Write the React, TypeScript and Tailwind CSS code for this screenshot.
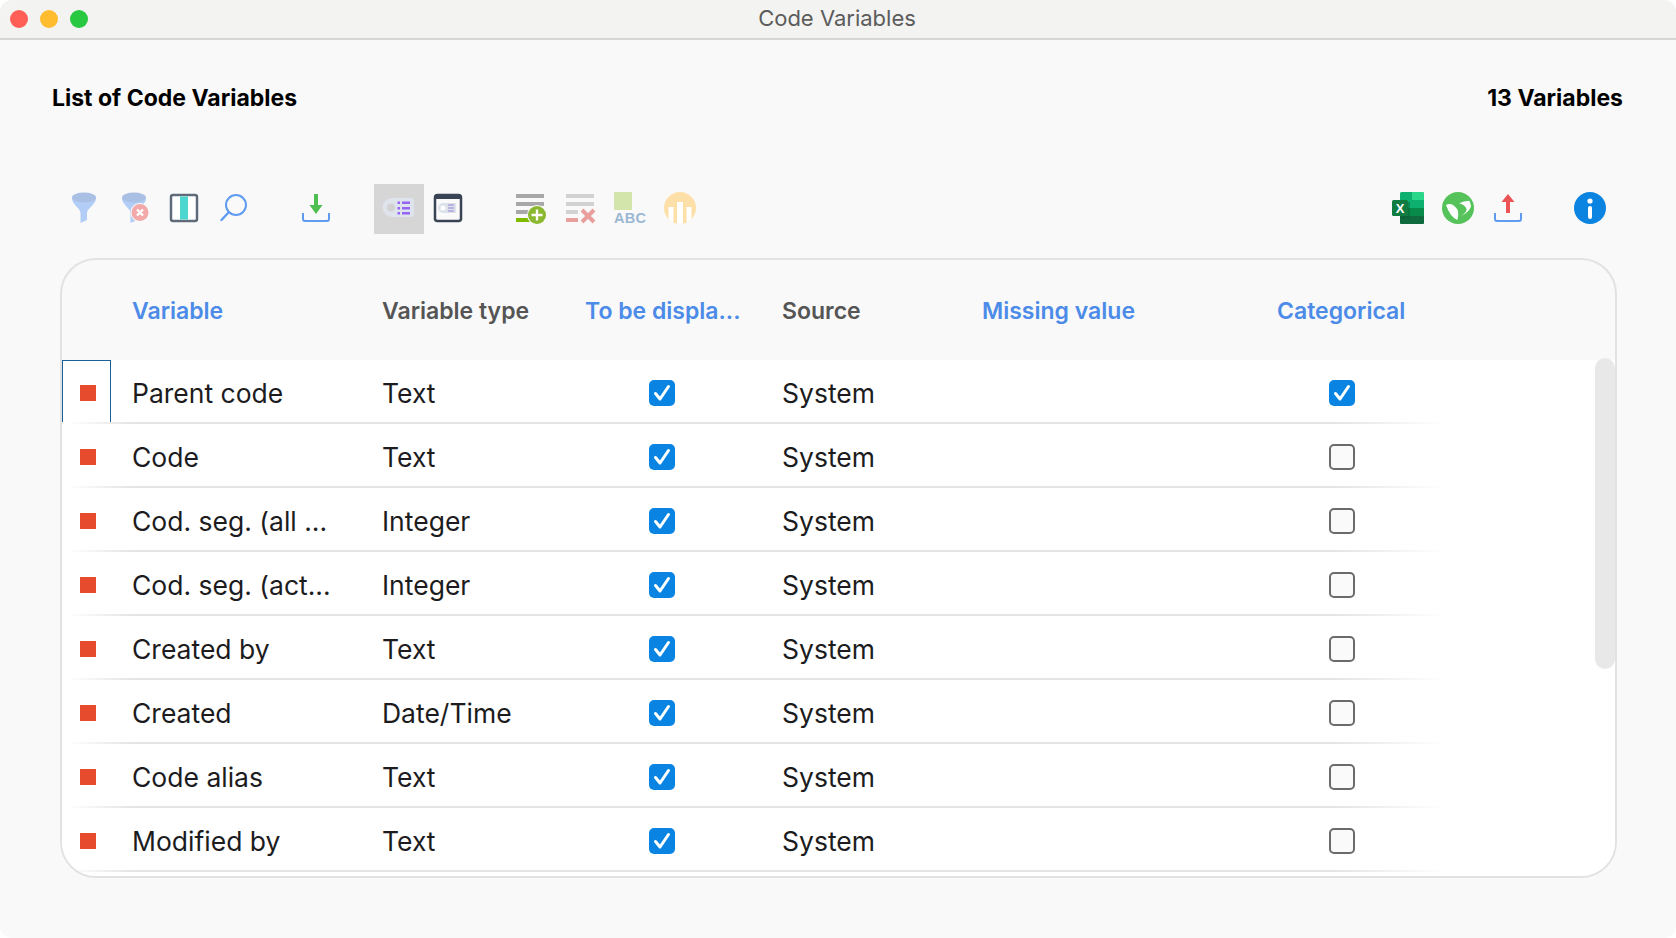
import React from "react";

const rows = [
    ["Parent code", "Text", true],
    ["Code", "Text", false],
    ["Cod. seg. (all ...", "Integer", false],
    ["Cod. seg. (act...", "Integer", false],
    ["Created by", "Text", false],
    ["Created", "Date/Time", false],
    ["Code alias", "Text", false],
    ["Modified by", "Text", false],
] as const;

function Icon({ children }: { children: React.ReactNode }) {
    return (
        <svg viewBox="0 0 32 32" className="w-8 h-8 overflow-visible">
            {children}
        </svg>
    );
}

function Slot({ children, active }: { children: React.ReactNode; active?: boolean }) {
    return (
        <div className={"w-[50px] h-[50px] flex items-start pt-2 justify-center " + (active ? "bg-[#d6d6d6]" : "")}>
            {children}
        </div>
    );
}

function Funnel() {
    return (
        <>
            <path d="M4 6C4 13 12.5 16 12.5 21V31L19 28V21C19 16 28 13 28 6Z" fill="#b2cdf6" />
            <ellipse cx="16" cy="5.5" rx="12" ry="5" fill="#a9bfe3" />
        </>
    );
}

function Tray() {
    return <path d="M3 21V27Q3 29 5 29H27Q29 29 29 27V21" fill="none" stroke="#5f9bf0" strokeWidth="2" />;
}

function Checkbox({ checked }: { checked: boolean }) {
    if (checked) {
        return (
            <div className="w-[26px] h-[26px] rounded-[5px] bg-[#0a84e3] flex items-center justify-center">
                <svg viewBox="0 0 26 26" className="w-[26px] h-[26px]">
                    <path d="M6.5 13.5L11 19L19.5 6.5" fill="none" stroke="#fff" strokeWidth="3" strokeLinecap="round" strokeLinejoin="round" />
                </svg>
            </div>
        );
    }
    return <div className="w-[26px] h-[26px] rounded-[5px] border-2 border-[#6b6b6b] bg-[#fafafa]" />;
}

export default function App() {
    return (
        <div className="w-[1676px] h-[938px] bg-white overflow-hidden font-['Inter',sans-serif]">
            <div className="h-full rounded-[12px] bg-[#f9f9f9] overflow-hidden">
                <div className="h-[40px] relative bg-[#f3f3f1] border-b-2 border-[#d6d6d6] flex items-center justify-center">
                    <div className="absolute left-[10px] top-[10px] flex gap-3">
                        <span className="w-[18px] h-[18px] rounded-full bg-[#ff5f57]" />
                        <span className="w-[18px] h-[18px] rounded-full bg-[#febc2e]" />
                        <span className="w-[18px] h-[18px] rounded-full bg-[#28c840]" />
                    </div>
                    <span className="text-[22px] text-[#5c5c5c] -ml-[2px] mb-[2px]">Code Variables</span>
                </div>

                <div className="flex justify-between pl-[52px] pr-[53px] pt-[44px] text-[23px] leading-[28px] font-bold text-black">
                    <span>List of Code Variables</span>
                    <span>13 Variables</span>
                </div>

                <div className="flex justify-between mt-[72px] ml-[59px] mr-[61px]">
                    <div className="flex">
                        <div className="flex">
                            <Slot>
                                <Icon>
                                    <Funnel />
                                </Icon>
                            </Slot>
                            <Slot>
                                <Icon>
                                    <Funnel />
                                    <circle cx="22" cy="20.5" r="9.5" fill="#f9f9f9" />
                                    <circle cx="22" cy="20.5" r="8.5" fill="#f2a9a9" />
                                    <path d="M19 17.5L25 23.5M25 17.5L19 23.5" stroke="#fff" strokeWidth="2.4" />
                                </Icon>
                            </Slot>
                            <Slot>
                                <Icon>
                                    <rect x="3" y="3" width="26" height="26" rx="2" fill="#fff" stroke="#5f6b7a" strokeWidth="2.5" />
                                    <rect x="12" y="4.5" width="8" height="23" fill="#4dd6cf" />
                                </Icon>
                            </Slot>
                            <Slot>
                                <Icon>
                                    <circle cx="18" cy="13" r="10" fill="none" stroke="#5f9bf0" strokeWidth="2" />
                                    <path d="M10.5 20.5L3.5 28" stroke="#5f9bf0" strokeWidth="2.4" strokeLinecap="round" />
                                </Icon>
                            </Slot>
                        </div>
                        <div className="ml-8">
                            <Slot>
                                <Icon>
                                    <Tray />
                                    <path d="M14 2H18V13H22.5L16 22L9.5 13H14Z" fill="#4fbf52" />
                                </Icon>
                            </Slot>
                        </div>
                        <div className="flex ml-[33px]">
                            <Slot active>
                                <Icon>
                                    <path d="M9 6H28Q31 6 31 10V21Q31 25 28 25H9A9.5 9.5 0 0 1 9 6Z" fill="#dfe3ec" />
                                    <circle cx="8" cy="15.5" r="4" fill="#d2d2d2" />
                                    <g fill="#9466f5">
                                        <rect x="14.5" y="9.5" width="2.5" height="2.5" />
                                        <rect x="14.5" y="15" width="2.5" height="2.5" />
                                        <rect x="14.5" y="20" width="2.5" height="2.5" />
                                        <rect x="19" y="9.5" width="8" height="2.5" />
                                        <rect x="19" y="15" width="8" height="2.5" />
                                        <rect x="19" y="20" width="8" height="2.5" />
                                    </g>
                                </Icon>
                            </Slot>
                            <Slot>
                                <Icon>
                                    <rect x="2" y="3" width="26" height="26" rx="2.5" fill="#fafafa" stroke="#3a4354" strokeWidth="2.5" />
                                    <rect x="2" y="3" width="26" height="4" fill="#3a4354" />
                                    <path d="M10 11H22Q23 11 23 12V20Q23 21 22 21H10A5 5 0 0 1 10 11Z" fill="#dde2ea" />
                                    <circle cx="10" cy="16" r="2.5" fill="#fff" />
                                    <path d="M15 13H21M15 16H21M15 19H21" stroke="#9a84d8" strokeWidth="1.2" />
                                </Icon>
                            </Slot>
                        </div>
                        <div className="flex ml-8">
                            <Slot>
                                <Icon>
                                    <rect x="1" y="2" width="28" height="4" fill="#a8a8a8" />
                                    <rect x="1" y="10" width="28" height="4" fill="#a8a8a8" />
                                    <rect x="1" y="18" width="14" height="4" fill="#a8a8a8" />
                                    <rect x="1" y="26" width="14" height="4" fill="#7fbb00" />
                                    <circle cx="22" cy="23" r="10" fill="#f9f9f9" />
                                    <circle cx="22" cy="23" r="9" fill="#8ab82e" />
                                    <path d="M22 17.5V28.5M16.5 23H27.5" stroke="#fff" strokeWidth="2.4" />
                                </Icon>
                            </Slot>
                            <Slot>
                                <Icon>
                                    <rect x="1" y="2" width="28" height="4" fill="#d2d2d2" />
                                    <rect x="1" y="10" width="28" height="4" fill="#d2d2d2" />
                                    <rect x="1" y="18" width="12" height="4" fill="#d2d2d2" />
                                    <rect x="1" y="26" width="12" height="4" fill="#e8a09c" />
                                    <path d="M17 18L29 30M29 18L17 30" stroke="#e8a09c" strokeWidth="4" />
                                </Icon>
                            </Slot>
                            <Slot>
                                <Icon>
                                    <rect x="-1" y="0" width="18" height="18" fill="#d3e5ab" />
                                    <text x="-1" y="31" fontFamily="Liberation Sans" fontWeight="700" fontSize="14.5" textLength="32" fill="#9bb8d3">
                                        ABC
                                    </text>
                                </Icon>
                            </Slot>
                            <Slot>
                                <Icon>
                                    <defs>
                                        <clipPath id="chart">
                                            <circle cx="15" cy="16" r="16" />
                                        </clipPath>
                                    </defs>
                                    <circle cx="15" cy="16" r="16" fill="#fde0a8" />
                                    <path d="M3.5 15H8.5V32H3.5ZM12 10H18V32H12ZM21.5 15H26.5V32H21.5Z" fill="#fff" clipPath="url(#chart)" />
                                </Icon>
                            </Slot>
                        </div>
                    </div>
                    <div className="flex">
                        <Slot>
                            <Icon>
                                <rect x="8" y="0" width="24" height="32" rx="1.5" fill="#0eb070" />
                                <path d="M20 0H30.5Q32 0 32 1.5V8H20Z" fill="#2ad68a" />
                                <rect x="8" y="16" width="24" height="8" fill="#088a4a" />
                                <path d="M8 24H32V30.5Q32 32 30.5 32H9.5Q8 32 8 30.5Z" fill="#0f6b3e" />
                                <rect x="8" y="10" width="10" height="17" fill="#0a5c34" opacity="0.45" />
                                <rect x="0" y="8" width="16" height="16" rx="1.5" fill="#107c41" />
                                <text x="8" y="20.5" textAnchor="middle" fontFamily="Liberation Sans" fontWeight="700" fontSize="13" fill="#fff">
                                    X
                                </text>
                            </Icon>
                        </Slot>
                        <Slot>
                            <Icon>
                                <circle cx="16" cy="16" r="16" fill="#55c25a" />
                                <path d="M4 13Q9.7 9.7 15.3 17.3Q17.3 21.3 15.3 28Q8 24.7 4 13Z" fill="#fff" />
                                <path d="M27.3 8.7Q21.3 8.7 17.3 11.3Q23 13 24.7 17.3Q24 21.3 18.7 24Q26 21.3 29 14.7Q28.7 11.3 27.3 8.7Z" fill="#fff" />
                            </Icon>
                        </Slot>
                        <div className="mr-8">
                            <Slot>
                                <Icon>
                                    <Tray />
                                    <path d="M16 2L22.5 10H18V21H14V10H9.5Z" fill="#ea5455" />
                                </Icon>
                            </Slot>
                        </div>
                        <Slot>
                            <Icon>
                                <circle cx="16" cy="16" r="16" fill="#0a84e0" />
                                <circle cx="16" cy="9" r="2.6" fill="#fff" />
                                <rect x="14" y="14" width="4" height="13" rx="2" fill="#fff" />
                            </Icon>
                        </Slot>
                    </div>
                </div>

                <div className="relative mt-[24px] ml-[60px] w-[1557px] h-[620px] rounded-[36px] border-2 border-[#e2e2e2] overflow-hidden">
                    <div className="h-[100px] flex items-center text-[23px] font-semibold text-[#4c8be8] pt-[2px]">
                        <div className="ml-[70px] w-[250px]">Variable</div>
                        <div className="w-[203px] text-[#555]">Variable type</div>
                        <div className="w-[197px]">To be displa...</div>
                        <div className="w-[200px] text-[#555]">Source</div>
                        <div className="w-[295px]">Missing value</div>
                        <div>Categorical</div>
                    </div>
                    <div className="bg-white h-[518px]">
                        {rows.map((r, i) => (
                            <div key={i} className="h-[64px] relative flex items-center text-[26.5px] text-[#1c1c1e]">
                                <div className={"w-[49px] h-[62px] self-start mr-[20px] flex items-center justify-center " + (i === 0 ? "border border-b-0 border-[#1a5f96]" : "")}>
                                    <span className="w-4 h-4 bg-[#e54b2c] mt-[3px] ml-[3px]" />
                                </div>
                                <div className="w-[251px] pl-[1px] mt-[4px]">{r[0]}</div>
                                <div className="w-[203px] mt-[4px]">{r[1]}</div>
                                <div className="w-[197px] flex mt-[2px]">
                                    <div className="ml-[64px]">
                                        <Checkbox checked />
                                    </div>
                                </div>
                                <div className="w-[200px] mt-[4px]">System</div>
                                <div className="w-[295px]" />
                                <div className="ml-[52px] mt-[2px]">
                                    <Checkbox checked={r[2]} />
                                </div>
                                <div className="absolute left-0 right-0 bottom-0 h-[2px] bg-[linear-gradient(to_right,transparent_4px,#e4e4e4_70px,#e4e4e4_1275px,transparent_1383px)]" />
                            </div>
                        ))}
                    </div>
                    <div className="absolute right-0 top-[98px] w-[20px] h-[311px] rounded-full bg-[#e8e8e8]" />
                </div>
            </div>
        </div>
    );
}
